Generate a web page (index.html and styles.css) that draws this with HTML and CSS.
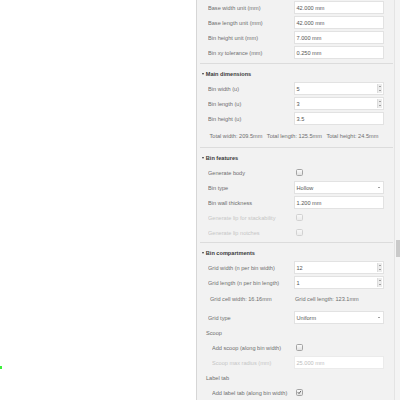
FILE: index.html
```html
<!DOCTYPE html>
<html>
<head>
<meta charset="utf-8">
<link rel="stylesheet" href="styles.css">
</head>
<body>
<div class="page">
  <div class="scene"><span class="axis-dot"></span></div>
  <aside class="panel">
    <div class="panel-content">
      <section class="group group-top">
        <div class="row"><span class="label">Base width unit (mm)</span><span class="input">42.000 mm</span></div>
        <div class="row"><span class="label">Base length unit (mm)</span><span class="input">42.000 mm</span></div>
        <div class="row"><span class="label">Bin height unit (mm)</span><span class="input">7.000 mm</span></div>
        <div class="row"><span class="label">Bin xy tolerance (mm)</span><span class="input">0.250 mm</span></div>
      </section>

      <section class="group group-main">
        <div class="group-title"><span class="caret"></span>Main dimensions</div>
        <div class="row"><span class="label">Bin width (u)</span><span class="input">5<span class="spin"><i class="up"></i><i class="down"></i></span></span></div>
        <div class="row"><span class="label">Bin length (u)</span><span class="input">3<span class="spin"><i class="up"></i><i class="down"></i></span></span></div>
        <div class="row"><span class="label">Bin height (u)</span><span class="input">3.5</span></div>
        <div class="totals"><span>Total width: 209.5mm</span><span>Total length: 125.5mm</span><span>Total height: 24.5mm</span></div>
      </section>

      <section class="group group-features">
        <div class="group-title"><span class="caret"></span>Bin features</div>
        <div class="row"><span class="label">Generate body</span><span class="check"></span></div>
        <div class="row"><span class="label">Bin type</span><span class="input select">Hollow<span class="arrow"></span></span></div>
        <div class="row"><span class="label">Bin wall thickness</span><span class="input">1.200 mm</span></div>
        <div class="row disabled"><span class="label">Generate lip for stackability</span><span class="check"></span></div>
        <div class="row disabled"><span class="label">Generate lip notches</span><span class="check"></span></div>
      </section>

      <section class="group group-compartments">
        <div class="group-title"><span class="caret"></span>Bin compartments</div>
        <div class="row"><span class="label">Grid width (n per bin width)</span><span class="input">12<span class="spin"><i class="up"></i><i class="down"></i></span></span></div>
        <div class="row"><span class="label">Grid length (n per bin length)</span><span class="input">1<span class="spin"><i class="up"></i><i class="down"></i></span></span></div>
        <div class="cells"><span class="cell-a">Grid cell width: 16.16mm</span><span class="cell-b">Grid cell length: 123.1mm</span></div>
        <div class="row row-gridtype"><span class="label">Grid type</span><span class="input select">Uniform<span class="arrow"></span></span></div>
        <div class="subgroup-title">Scoop</div>
        <div class="row sub"><span class="label">Add scoop (along bin width)</span><span class="check"></span></div>
        <div class="row sub disabled"><span class="label">Scoop max radius (mm)</span><span class="input">25.000 mm</span></div>
        <div class="subgroup-title">Label tab</div>
        <div class="row sub"><span class="label">Add label tab (along bin width)</span><span class="check checked"><svg viewBox="0 0 10 10"><path d="M2.2 5.2 L4.2 7.4 L8 2.4" fill="none" stroke="#333" stroke-width="1.6" stroke-linecap="round" stroke-linejoin="round"/></svg></span></div>
      </section>
    </div>
    <div class="scrollbar"><div class="thumb"></div></div>
  </aside>
</div>
</body>
</html>
```

FILE: styles.css
```css
html, body {
  margin: 0;
  padding: 0;
  background: #ffffff;
}

body {
  font-family: "Liberation Sans", Arial, sans-serif;
  font-size: 5.6px;
  color: #6e6e6e;
}

.page {
  display: flex;
  height: 400px;
  overflow: hidden;
}

.scene {
  flex: 1;
  position: relative;
}

.axis-dot {
  position: absolute;
  left: 0;
  top: 366px;
  width: 2px;
  height: 3px;
  background: #3cf03c;
}

.panel {
  width: 203px;
  display: flex;
  background: #f2f2f2;
  border-left: 1px solid #d6d6d6;
}

.panel-content {
  flex: 1;
  min-width: 0;
}

.group {
  margin: 0 1px 0 3px;
  border-bottom: 1px solid #dcdcdc;
}

.group-top {
  padding-bottom: 3px;
}

.group-main {
  padding-top: 2px;
  padding-bottom: 4px;
}

.group-features {
  padding-top: 2px;
  padding-bottom: 2px;
}

.group-compartments {
  padding-top: 3px;
  border-bottom: none;
}

.group-title {
  height: 15px;
  display: flex;
  align-items: center;
  padding-left: 2px;
  font-weight: bold;
  color: #3a3a3a;
}

.group-compartments .group-title {
  height: 14px;
}

.caret {
  width: 0;
  height: 0;
  border-left: 1.5px solid transparent;
  border-right: 1.5px solid transparent;
  border-top: 2.5px solid #3a3a3a;
  margin-right: 1.8px;
}

.row {
  display: flex;
  align-items: center;
  height: 15px;
  padding-left: 8px;
}

.label {
  width: 86px;
  flex: none;
  white-space: nowrap;
  overflow: hidden;
}

.row.sub {
  padding-left: 12px;
}

.row.sub .label {
  width: 82px;
}

.input {
  position: relative;
  width: 90px;
  height: 12.5px;
  box-sizing: border-box;
  background: #ffffff;
  border: 1px solid #e2e2e2;
  display: flex;
  align-items: center;
  padding-left: 1.5px;
  color: #555555;
}

.spin {
  position: absolute;
  right: 1px;
  top: 1px;
  bottom: 1px;
  width: 4.5px;
  background: #ececec;
  border-left: 0.5px solid #dcdcdc;
  display: flex;
  flex-direction: column;
  align-items: center;
  justify-content: space-evenly;
}

.spin i {
  width: 0;
  height: 0;
  border-left: 1.2px solid transparent;
  border-right: 1.2px solid transparent;
}

.spin .up {
  border-bottom: 1.5px solid #555;
}

.spin .down {
  border-top: 1.5px solid #555;
}

.select .arrow {
  position: absolute;
  right: 3px;
  top: 4.5px;
  width: 0;
  height: 0;
  border-left: 1.2px solid transparent;
  border-right: 1.2px solid transparent;
  border-top: 1.8px solid #444;
}

.check {
  width: 6.8px;
  height: 6.8px;
  box-sizing: border-box;
  margin-left: 2px;
  border: 0.8px solid #a4a4a4;
  border-radius: 1.6px;
  background: linear-gradient(#fbfbfb, #e2e2e2);
  display: flex;
}

.check svg {
  width: 100%;
  height: 100%;
}

.disabled .label {
  color: #c6c6c6;
}

.disabled .check {
  border-color: #d2d2d2;
  background: linear-gradient(#f8f8f8, #ececec);
}

.disabled .input {
  color: #bdbdbd;
  border-color: #ebebeb;
}

.totals {
  display: flex;
  gap: 4.5px;
  height: 14px;
  align-items: center;
  margin-top: 3px;
  padding-left: 9.5px;
  white-space: nowrap;
}

.cells {
  display: flex;
  height: 14px;
  align-items: center;
  margin-top: 2px;
  padding-left: 10px;
  white-space: nowrap;
}

.cell-a {
  width: 85px;
}

.row-gridtype {
  margin-top: 4px;
}

.subgroup-title {
  height: 15px;
  display: flex;
  align-items: center;
  padding-left: 6px;
}

.scrollbar {
  width: 5px;
  flex: none;
  background: #f4f4f4;
  border-left: 0.5px solid #e4e4e4;
  position: relative;
}

.thumb {
  position: absolute;
  left: 1px;
  right: 0;
  top: 240px;
  height: 17px;
  background: #cacaca;
}
```
